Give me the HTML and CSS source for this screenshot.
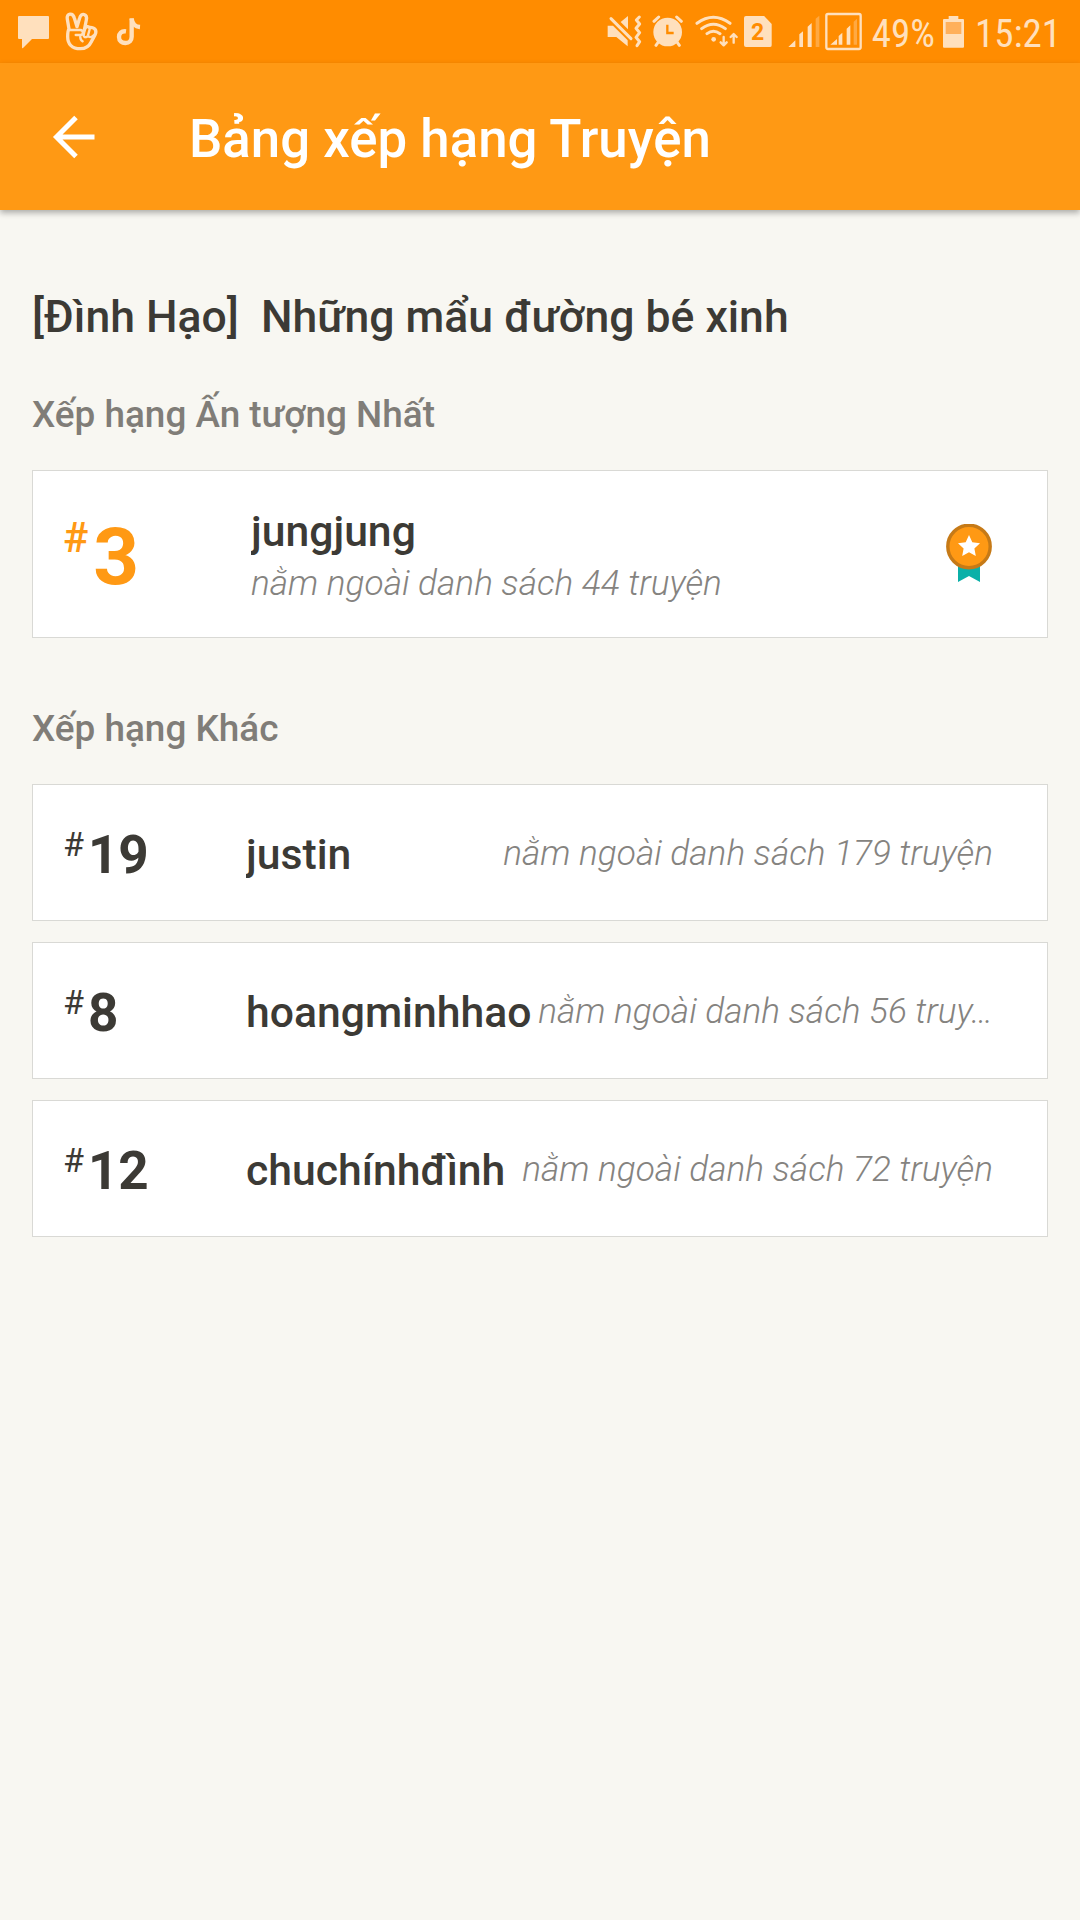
FILE: index.html
```
<!doctype html>
<html lang="vi">
<head>
    <meta charset="utf-8">
    <title>Bảng xếp hạng Truyện</title>
    <meta name="theme-color" content="#ff8c00">
    <link rel="stylesheet" href="styles.css">
</head>
<body>
    <div class="statusbar">
        <div class="status-left">
            <!-- chat -->
            <svg width="32" height="63" viewBox="54 0 96 189">
                <path d="M57 48H144Q147 48 147 51V114Q147 117 144 117H96L69 144Q66 146 66 142V117H57Q54 117 54 114V51Q54 48 57 48Z"/>
            </svg>
            <!-- hand -->
            <svg class="line" width="34" height="63" viewBox="194 0 102 189">
                <path stroke-width="10" d="M206 87L201 58C197 38 218 38 222 54L230 80L238 54C243 36 262 42 258 60L252 90C255 79 262 78 267 82C283 81 291 91 284 105L273 125C265 142 254 146 240 146C214 146 202 131 202 110C202 98 202 92 206 87Z"/>
                <path stroke-width="7" d="M207 90H240C251 91 249 105 240 105H226M240 105C239 115 241 121 247 124M253 90L250 106C251 113 260 114 263 106L269 84M263 106C266 114 275 112 280 106"/>
            </svg>
            <!-- music note -->
            <svg class="line note-icon" width="25" height="63" viewBox="346 0 75 189">
                <path stroke-width="13" stroke-linecap="butt" d="M376 94C362 92 355 101 355 111C355 124 364 129 374 129C386 129 393 121 393 110V55"/>
                <path stroke-width="13" stroke-linecap="butt" d="M393 56C395 71 404 80 418 81"/>
            </svg>
        </div>
        <div class="status-right">
            <!-- vibrate -->
            <svg class="mute" width="36" height="63" viewBox="52 0 108 189">
                <path d="M54 77H70L114 121V139L80 111H54ZM93 66L115 48V88Z"/>
                <path class="stroke" stroke-width="9" d="M64 56L124 116"/>
                <path class="stroke" stroke-width="9" d="M149 51L140 60L150 72L139 85L150 98L139 112L150 125L142 137"/>
            </svg>
            <!-- alarm -->
            <svg class="alarm" width="32" height="63" viewBox="187 0 96 189">
                <circle cx="234" cy="96" r="43"/>
                <path class="stroke" stroke-width="9" d="M193 64L207 51M275 64L261 51M206 126L199 136M262 126L269 136"/>
                <path class="cut" d="M233 74V99H252"/>
            </svg>
            <!-- wifi -->
            <svg class="line wifi" width="43" height="63" viewBox="316 0 129 189">
                <path stroke-width="9" d="M322 70Q371 34 421 70M336 86Q371 59 407 86M352 101Q371 87 391 101"/>
                <path stroke-width="7" d="M402 111V135M393 127L402 136L411 127M432 128V103M423 111L432 102L441 111"/>
                <circle class="dot" cx="372" cy="118" r="7"/>
            </svg>
            <div class="sim">2</div>
            <!-- signal -->
            <svg class="signal" width="32" height="63" viewBox="25 0 96 189">
                <path d="M26 141L47 121V141ZM59 103L70 94V141H59ZM84 80L96 69V141H84Z"/>
                <path opacity=".35" d="M108 56L119 47V141H108Z"/>
            </svg>
            <svg class="signal-box" width="38" height="63" viewBox="136 0 114 189">
                <rect class="stroke" stroke-width="7" x="140" y="42" width="103" height="105" rx="5"/>
                <path d="M152 134L172 117V134ZM177 108L188 98V134H177ZM201 86L212 76V134H201Z"/>
                <path opacity=".35" d="M222 65L232 56V134H222Z"/>
            </svg>
            <span class="percent">49%</span>
            <!-- battery -->
            <svg class="battery" width="21" height="63" viewBox="489 0 63 189">
                <path d="M506 48H535V57H549Q552 57 552 60V140Q552 143 549 143H492Q489 143 489 140V60Q489 57 492 57H506Z"/>
                <path fill="#ffb05b" d="M497 66H544V102H497Z"/>
            </svg>
            <span class="time">15:21</span>
        </div>
    </div>

    <header class="appbar">
        <svg class="back" width="44" height="44" viewBox="0 0 44 44">
            <path d="M42.500 22H4M24 2.500L4.500 22L24 41.500"/>
        </svg>
        <span class="appbar-title">Bảng xếp hạng Truyện</span>
    </header>

    <main>
        <h1>[Đình Hạo]&nbsp; Những mẩu đường bé xinh</h1>

        <h2>Xếp hạng Ấn tượng Nhất</h2>
        <div class="card best">
            <div class="rank"><sup>#</sup><b>3</b></div>
            <div class="info">
                <div class="name">jungjung</div>
                <div class="note">nằm ngoài danh sách 44 truyện</div>
            </div>
            <svg class="medal" width="46" height="58" viewBox="0 0 46 58">
                <path fill="#0bb0a8" d="M12 38H34V58L23 52L12 58Z"/>
                <circle cx="23" cy="22.500" r="21.200" fill="#ff9914" stroke="#c67a17" stroke-width="3.400"/>
                <path fill="#fff" d="M23 11L26.300 18.200L34 19.200L28.400 24.500L29.800 32L23 28.300L16.200 32L17.600 24.500L12 19.200L19.700 18.200Z"/>
            </svg>
        </div>

        <h2 class="other">Xếp hạng Khác</h2>
        <div class="list">
            <div class="card">
                <div class="rank"><sup>#</sup><b>19</b></div>
                <div class="name">justin</div>
                <div class="note">nằm ngoài danh sách 179 truyện</div>
            </div>
            <div class="card">
                <div class="rank"><sup>#</sup><b>8</b></div>
                <div class="name">hoangminhhao</div>
                <div class="note">nằm ngoài danh sách 56 truy…</div>
            </div>
            <div class="card">
                <div class="rank"><sup>#</sup><b>12</b></div>
                <div class="name">chuchínhđình</div>
                <div class="note">nằm ngoài danh sách 72 truyện</div>
            </div>
        </div>
    </main>
</body>
</html>
```
FILE: styles.css
```
* {
    box-sizing: border-box;
}

body {
    margin: 0;
    min-height: 1920px;
    background: #f8f7f2;
    color: #3c3a35;
    font-family: Roboto, "Noto Sans", sans-serif;
}

svg {
    display: block;
    flex: none;
}

/* status bar */
.statusbar {
    display: flex;
    justify-content: space-between;
    height: 63px;
    padding: 0 19px 0 18px;
    background: #ff8c00;
    color: #ffe0bd;
    fill: #ffe0bd;
    font-family: "Roboto Condensed", Roboto, sans-serif;
    font-size: 39px;
    line-height: 68px;
}

.status-left,
.status-right {
    display: flex;
}

.status-left { gap: 15px; }
.note-icon { margin-left: 2px; }

.stroke,
.line {
    fill: none;
    stroke: #ffe0bd;
    stroke-linecap: round;
    stroke-linejoin: round;
}

.dot {
    fill: #ffe0bd;
    stroke: none;
}

.cut {
    fill: none;
    stroke: #ff8c00;
    stroke-width: 7;
}

.alarm { margin-left: 9px; }
.wifi { margin-left: 11px; }

.sim {
    width: 28px;
    height: 31px;
    margin: 16px 0 0 6px;
    border-radius: 2px;
    background: #ffe0bd;
    clip-path: polygon(0 0, 73% 0, 100% 26%, 100% 100%, 0 100%);
    color: #ff8c00;
    font: 700 23px/33px Roboto, sans-serif;
    text-align: center;
}

.signal { margin-left: 16px; }
.signal-box { margin-left: 5px; }
.percent { margin-left: 9px; }
.battery { margin-left: 8px; }
.time { margin-left: 11px; }

/* app bar */
.appbar {
    display: flex;
    align-items: center;
    height: 147px;
    padding-left: 52px;
    background: #ff9914;
    box-shadow: 0 3px 6px rgba(0,0,0,.3);
}

.back {
    fill: none;
    stroke: #fff;
    stroke-width: 5;
}

.appbar-title {
    margin-left: 93px;
    padding-top: 4px;
    color: #fff;
    font-size: 52.8px;
    font-weight: 500;
}

main {
    padding: 72px 32px 0;
}

h1 {
    margin: 0;
    font-size: 44.5px;
    font-weight: 500;
    line-height: 70px;
}

h2 {
    margin: 37px 0 29px;
    color: #807d78;
    font-size: 36.9px;
    font-weight: 500;
    line-height: 52px;
}

h2.other { margin-top: 65px; }

/* ranking cards */
.card {
    display: flex;
    align-items: center;
    height: 137px;
    padding: 0 54px 0 30px;
    border: 1px solid #d9d9d5;
    background: #fff;
}

.list {
    display: grid;
    grid-template-columns: minmax(0, 1fr);
    gap: 21px;
}

.rank {
    display: flex;
    flex: none;
    gap: 4px;
    width: 183px;
}

.rank sup {
    padding-top: 5px;
    font-size: 34px;
    line-height: 46px;
}

.rank b {
    padding-top: 5px;
    font-size: 53px;
    line-height: 68px;
}

.name {
    flex: none;
    overflow: hidden;
    padding-top: 3px;
    font-size: 42.7px;
    font-weight: 500;
    line-height: 56px;
}

.note {
    flex: 1;
    min-width: 0;
    margin-left: 4px;
    padding-top: 1px;
    color: #85837f;
    font-size: 35.2px;
    font-style: italic;
    font-weight: 300;
    line-height: 50px;
    text-align: right;
    white-space: nowrap;
}

.best {
    height: 168px;
    padding-right: 55px;
}

.best .rank {
    gap: 5px;
    width: 188px;
    color: #ff9914;
}

.best .rank sup {
    padding-top: 4px;
    font-size: 42px;
    font-weight: 500;
    line-height: 58px;
}

.best .rank b {
    padding-top: 6px;
    font-size: 80px;
    line-height: 92px;
}

.best .info { flex: 1; }

.best .name { padding-top: 3px; }

.best .note {
    margin: -2px 0 0;
    text-align: left;
}

.medal { margin-bottom: 2px; }
```
